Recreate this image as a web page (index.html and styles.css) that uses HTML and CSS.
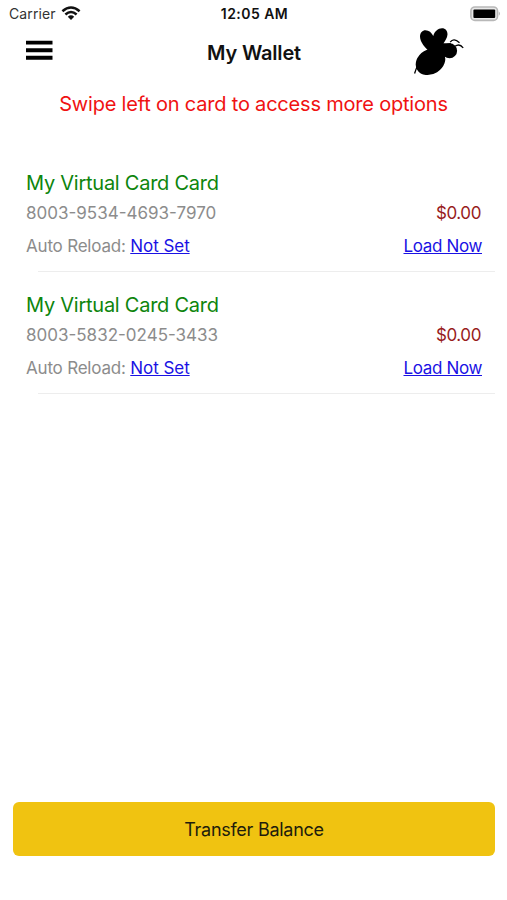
FILE: index.html
```html
<!DOCTYPE html>
<html lang="en">
<head>
<meta charset="utf-8">
<title>My Wallet</title>
<link rel="stylesheet" href="styles.css">
</head>
<body>
<div class="screen">
  <div class="status">
    <div class="carrier"><span>Carrier</span>
      <svg class="wifi" width="20" height="15" viewBox="0 0 20 15"><g fill="none" stroke="#111" stroke-width="2.5"><path d="M1.4 5.3Q10-2.2 18.6 5.3"/><path d="M4.4 8.5Q10 3.6 15.6 8.5"/></g><path d="M6.8 10.7Q10 8 13.2 10.7L10 14Z" fill="#111"/></svg>
    </div>
    <div class="time">12:05 AM</div>
    <svg class="battery" width="31" height="16" viewBox="0 0 31 16"><rect x=".9" y="1" width="26.6" height="13.4" rx="4" fill="#e8e8e8" stroke="#b8b8b8" stroke-width="1.6"/><rect x="3.4" y="3.6" width="21.8" height="8.5" rx="1" fill="#000"/><path d="M28.8 5.5Q30.8 7.6 28.8 9.8Z" fill="#aaa"/></svg>
  </div>
  <header class="bar">
    <svg class="menu" width="27" height="21" viewBox="0 0 27 21"><path d="M0 2.6H26.5M0 10.2H26.5M0 17.7H26.5" stroke="#000" stroke-width="3.9"/></svg>
    <h1 class="title">My Wallet</h1>
    <svg class="bee" width="52" height="50" viewBox="0 0 52 50"><g fill="#000"><ellipse cx="17.5" cy="33.7" rx="15.6" ry="12.4" transform="rotate(-32 17.5 33.7)"/><ellipse cx="36.6" cy="22.7" rx="7.5" ry="7.5"/><path d="M18 25C12 20 7 14 7 8.5C7 4.5 9.5 2.2 12.5 2.2C16 2.2 18.5 4.5 20.3 8C21.5 3.5 25 .3 29 .3C32.5 .3 34.6 3 34.5 6.5C34.3 10 32 13 30.5 15.2L38 15.3L36 29L20 28Z"/></g><path d="M37.2 14.2Q40.5 9.5 46.5 14.7M42 18.3Q46.5 15 50.2 19.8M4.2 38.5Q3 41 1.6 45.5" fill="none" stroke="#000" stroke-width="1.3"/></svg>
  </header>
  <p class="hint">Swipe left on card to access more options</p>
  <main class="cards">
    <section class="card">
      <h2 class="name">My Virtual Card Card</h2>
      <div class="row"><span class="number">8003-9534-4693-7970</span><span class="amount">$0.00</span></div>
      <div class="row actions"><span class="reload">Auto Reload: <a class="link">Not Set</a></span><a class="link load">Load Now</a></div>
    </section>
    <section class="card">
      <h2 class="name">My Virtual Card Card</h2>
      <div class="row"><span class="number">8003-5832-0245-3433</span><span class="amount">$0.00</span></div>
      <div class="row actions"><span class="reload">Auto Reload: <a class="link">Not Set</a></span><a class="link load">Load Now</a></div>
    </section>
  </main>
  <button class="transfer">Transfer Balance</button>
</div>
</body>
</html>
```
FILE: styles.css
```css
* { box-sizing: border-box; margin: 0; }
body { background: #fff; font-family: Inter, "Liberation Sans", sans-serif; }
.screen { display: flex; flex-direction: column; height: 900px; width: 507px; overflow: hidden; }
.status { display: grid; grid-template-columns: 1fr auto 1fr; height: 28px; padding: 0 6px 0 9px; align-items: center; }
.carrier { display: flex; align-items: center; gap: 5px; font-size: 14px; letter-spacing: .1px; line-height: 28px; color: #333; }
.wifi { margin-top: -2px; }
.time { font-size: 14px; font-weight: 600; letter-spacing: .45px; color: #111; line-height: 28px; margin-right: 1px; }
.battery { justify-self: end; margin-top: -1px; }
.bar { display: grid; grid-template-columns: 1fr auto 1fr; height: 50px; padding: 0 25px 0 26px; }
.menu { margin-top: 12px; }
.title { font-size: 20px; font-weight: 600; letter-spacing: -.2px; line-height: 50px; color: #111; }
.bee { justify-self: end; margin-right: 17px; }
.hint { height: 52px; line-height: 52px; text-align: center; font-size: 20px; letter-spacing: -.2px; color: #f01212; white-space: nowrap; }
.cards { flex: 1; padding-top: 20px; }
.card { height: 122px; padding: 18px 25px 0 26px; background: linear-gradient(#ededed, #ededed) 38px 121px / 457px 1px no-repeat; }
.name { font-size: 20px; font-weight: 400; letter-spacing: -.25px; line-height: 30px; color: #0d850d; }
.row { display: flex; justify-content: space-between; font-size: 17px; line-height: 30px; color: #8c8c8c; }
.actions { margin-top: 3px; letter-spacing: -.2px; }
.load { letter-spacing: -.35px; }
.amount { color: #981c1c; letter-spacing: -.4px; margin-right: 1px; }
.link { color: #1a12e4; text-decoration: underline; text-decoration-thickness: 1px; text-underline-offset: 1px; text-decoration-skip-ink: none; }
.reload .link { letter-spacing: -.05px; }
.transfer { height: 54px; margin: 0 12px 44px 13px; border: 0; border-radius: 6px; background: #f0c311; font: 400 18px/54px Inter, "Liberation Sans", sans-serif; letter-spacing: -.27px; color: #211c0c; padding: 1px 0 0; }
```
